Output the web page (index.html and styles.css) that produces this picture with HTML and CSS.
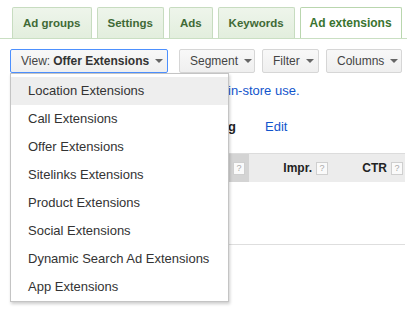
FILE: index.html
```html
<!DOCTYPE html>
<html>
<head>
<meta charset="utf-8">
<link rel="stylesheet" href="styles.css">
</head>
<body>
<div class="tabbar">
  <div class="tab">Ad groups</div>
  <div class="tab">Settings</div>
  <div class="tab">Ads</div>
  <div class="tab">Keywords</div>
  <div class="tab active">Ad extensions</div>
  <div class="tab stub"></div>
</div>
<div class="content">
  <div class="toolbar">
    <div class="viewwrap">
      <div class="btn view">View: <b>Offer Extensions</b><span class="caret"></span></div>
      <div class="menu">
        <div class="item hover">Location Extensions</div>
        <div class="item">Call Extensions</div>
        <div class="item">Offer Extensions</div>
        <div class="item">Sitelinks Extensions</div>
        <div class="item">Product Extensions</div>
        <div class="item">Social Extensions</div>
        <div class="item">Dynamic Search Ad Extensions</div>
        <div class="item">App Extensions</div>
      </div>
    </div>
    <div class="btn seg">Segment<span class="caret"></span></div>
    <div class="btn filt">Filter<span class="caret"></span></div>
    <div class="btn cols">Columns<span class="caret"></span></div>
  </div>
  <div class="note"><span class="link">in-store use.</span></div>
  <div class="setting"><b>Setting</b><span class="link edit">Edit</span></div>
  <div class="table">
    <div class="thead">
      <div class="th first"></div>
      <div class="th sorted"><span class="help">?</span></div>
      <div class="th impr">Impr. <span class="help">?</span></div>
      <div class="th ctr">CTR <span class="help">?</span></div>
    </div>
    <div class="trow"></div>
  </div>
</div>
</body>
</html>
```
FILE: styles.css
```css
* { box-sizing: border-box; }
body {
  margin: 0;
  background: #fff;
  font-family: Arial, "Liberation Sans", sans-serif;
  width: 407px;
  height: 309px;
  overflow: hidden;
}
.tabbar {
  display: flex;
  gap: 5px;
  padding: 7px 0 0 12px;
  border-bottom: 1px solid #c9dfc2;
  height: 39px;
  overflow: hidden;
}
.tab {
  flex: none;
  height: 32px;
  border: 1px solid #c7dcc0;
  border-bottom: none;
  border-radius: 2px 2px 0 0;
  background: linear-gradient(#eef5eb, #e2eedd);
  color: #3f6a36;
  font-weight: bold;
  font-size: 11.5px;
  line-height: 30px;
  padding: 0 10px;
  white-space: nowrap;
}
.tab.active {
  background: #fff;
  border-color: #b9d6ae;
  color: #3a7430;
  font-size: 12px;
  padding: 0 9px;
}
.tab.stub { width: 6px; padding: 0; }
.content { padding: 0 0 0 10px; width: 405px; }
.toolbar {
  display: flex;
  gap: 7px;
  margin-top: 10px;
  height: 24px;
}
.viewwrap { position: relative; margin-right: 4px; }
.btn {
  height: 24px;
  border: 1px solid #d6d6d6;
  border-radius: 2px;
  background: linear-gradient(#f8f8f8, #efefef);
  color: #444;
  font-size: 12px;
  line-height: 22px;
  padding: 0 9px 0 10px;
  white-space: nowrap;
  display: flex;
  align-items: center;
}
.btn b { color: #333; margin-left: 3px; }
.btn.view {
  width: 158px;
  border-color: #4d90fe;
  padding-left: 10px;
}
.btn.seg { width: 76px; }
.btn.filt { width: 57px; }
.btn.cols { width: 76px; }
.caret {
  display: inline-block;
  width: 0; height: 0;
  border-left: 4px solid transparent;
  border-right: 4px solid transparent;
  border-top: 4px solid #666;
  margin-left: 6px;
}
.menu {
  position: absolute;
  left: 0;
  top: 24px;
  width: 219px;
  height: 229px;
  background: #fff;
  border: 1px solid #c4c4c4;
  box-shadow: 1px 2px 3px rgba(0,0,0,0.2);
  padding-top: 3px;
  z-index: 5;
}
.item {
  height: 28px;
  line-height: 28px;
  padding-left: 17px;
  font-size: 13px;
  color: #333;
  white-space: nowrap;
}
.item.hover { background: #eeeeee; }
.note {
  margin-top: 10px;
  height: 16px;
  font-size: 13px;
  line-height: 16px;
  padding-left: 218px;
  white-space: nowrap;
}
.link { color: #1155cc; }
.setting {
  margin-top: 20px;
  height: 16px;
  font-size: 13px;
  line-height: 16px;
  color: #222;
  padding-left: 182px;
  white-space: nowrap;
}
.setting b { margin-right: 29px; }
.table { margin-top: 18px; width: 395px; }
.thead {
  display: flex;
  height: 29px;
  background: #ececec;
  border-top: 1px solid #dcdcdc;
  align-items: stretch;
}
.th {
  font-size: 12px;
  font-weight: bold;
  color: #222;
  display: flex;
  align-items: center;
  justify-content: flex-end;
  white-space: nowrap;
}
.th.first { width: 219px; }
.th.sorted { width: 20px; background: #d4d4d4; justify-content: center; }
.th.impr { width: 79px; }
.th.ctr { width: 77px; padding-right: 2px; }
.help {
  display: inline-block;
  width: 12px;
  height: 13px;
  border: 1px solid #cfcfcf;
  background: #fafafa;
  color: #aaa;
  font-size: 9px;
  font-weight: normal;
  line-height: 11px;
  text-align: center;
  margin-left: 4px;
}
.th.sorted .help { margin-left: 0; }
.trow {
  height: 63px;
  border-bottom: 1px solid #dedede;
}
```
